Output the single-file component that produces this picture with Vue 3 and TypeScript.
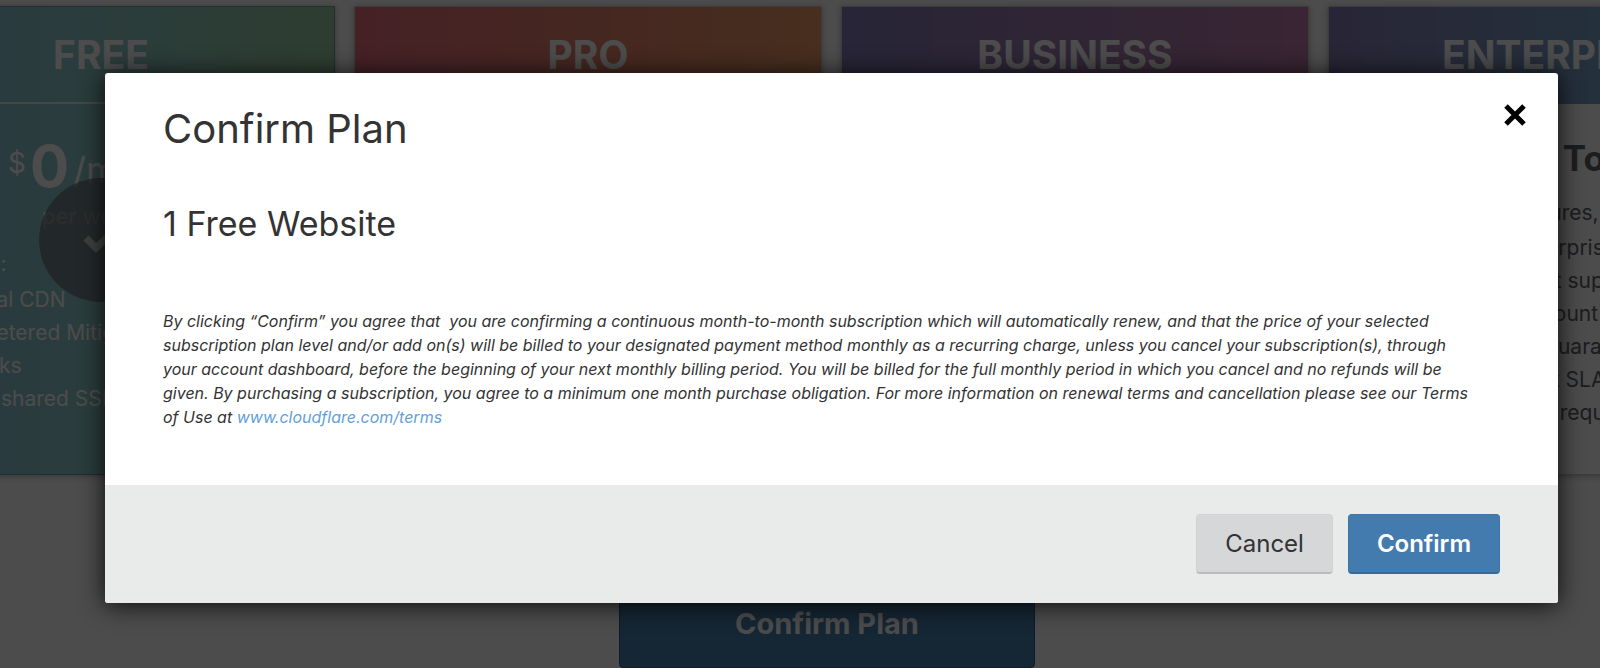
<script setup lang="ts">
interface Plan {
  id: string
  name: string
}

const otherPlans: Plan[] = [
  { id: 'pro', name: 'PRO' },
  { id: 'business', name: 'BUSINESS' },
]

const freeFeatures: string[] = ['Global CDN', 'Unmetered Mitigation of DDoS', 'attacks', 'With shared SSL certificate']

const enterpriseFeatures: string[] = [
  '24/7/365 enterprise-grade',
  'email and chat support',
  'Technical account manager',
  'Total uptime guarantee',
  'A 25x Support SLA',
  'Access to our request logs',
]
</script>

<template>
  <div class="page">
    <main class="plans-page">
      <div class="plans">
        <section class="card free">
          <h2 class="card-name">FREE</h2>
          <div class="card-body">
            <p class="price"><sup>$</sup><strong>0</strong><span>/mo</span></p>
            <p class="per">per website</p>
            <p class="lead">Offers:</p>
            <ul class="features">
              <li v-for="f in freeFeatures" :key="f">{{ f }}</li>
            </ul>
            <span class="selected">
              <svg viewBox="0 0 36 30" width="36" height="30" aria-hidden="true">
                <path d="M3 13 L13 23 L33 4" fill="none" stroke="currentColor" stroke-width="7" />
              </svg>
            </span>
          </div>
        </section>
        <section v-for="p in otherPlans" :key="p.id" class="card" :class="p.id">
          <h2 class="card-name">{{ p.name }}</h2>
        </section>
        <section class="card enterprise">
          <h2 class="card-name">ENTERPRISE</h2>
          <div class="card-body">
            <p class="talk">Talk To Us</p>
            <p class="intro">Business features, plus</p>
            <ul class="features">
              <li v-for="f in enterpriseFeatures" :key="f">{{ f }}</li>
            </ul>
          </div>
        </section>
      </div>
      <button type="button" class="plan-submit">Confirm Plan</button>
    </main>

    <div class="overlay">
      <div class="modal" role="dialog" aria-modal="true" aria-labelledby="modal-title">
        <div class="modal-body">
          <header class="modal-head">
            <h1 id="modal-title">Confirm Plan</h1>
            <button type="button" class="close" aria-label="Close">
              <svg viewBox="0 0 22 22" width="22" height="22" aria-hidden="true">
                <path d="M2 2 L20 20 M20 2 L2 20" fill="none" stroke="#000" stroke-width="5" />
              </svg>
            </button>
          </header>
          <h2 class="summary">1 Free Website</h2>
          <p class="legal">
            By clicking “Confirm” you agree that&nbsp; you are confirming a continuous month-to-month subscription which
            will automatically renew, and that the price of your selected subscription plan level and/or add on(s) will
            be billed to your designated payment method monthly as a recurring charge, unless you cancel your
            subscription(s), through your account dashboard, before the beginning of your next monthly billing period.
            You will be billed for the full monthly period in which you cancel and no refunds will be given. By
            purchasing a subscription, you agree to a minimum one month purchase obligation. For more information on
            renewal terms and cancellation please see our Terms of Use at
            <a href="#terms">www.cloudflare.com/terms</a>
          </p>
        </div>
        <footer class="modal-foot">
          <button type="button" class="btn cancel">Cancel</button>
          <button type="button" class="btn confirm">Confirm</button>
        </footer>
      </div>
    </div>
  </div>
</template>

<style>
body {
  margin: 0;
  background: #4c4c4c;
}
</style>

<style scoped>
.page {
  position: relative;
  min-height: 100vh;
  overflow: hidden;
  background: #fefefe;
  font-family: Inter, 'Liberation Sans', sans-serif;
  color: #333;
}
h1,
h2,
p,
ul {
  margin: 0;
  padding: 0;
  font-weight: 400;
}
ul {
  list-style: none;
}
button {
  font-family: inherit;
  cursor: pointer;
}

.plans-page {
  display: flex;
  flex-direction: column;
  align-items: center;
  padding-top: 6px;
}
.plans {
  display: flex;
  align-self: flex-start;
  gap: 19px;
  margin-left: -133px;
}
.card {
  position: relative;
  box-sizing: border-box;
  width: 468px;
  height: 469px;
  flex: none;
  border: 1px solid #ccc;
  background: #fefefe;
  box-shadow: 0 1px 6px rgba(0, 0, 0, 0.3);
  white-space: nowrap;
}
.card-name {
  box-sizing: border-box;
  height: 97px;
  line-height: 95px;
  text-align: center;
  font-size: 39px;
  font-weight: 700;
  color: #fefefe;
}
.free {
  border-color: #6f9bb0;
  background: linear-gradient(90deg, #85bfe0, #8fcac8 50%, #9acda4);
  color: #fefefe;
}
.free .card-name {
  border-bottom: 2px solid #e8eeee;
}
.pro .card-name {
  background: linear-gradient(90deg, #e7707f, #e7806f 45%, #ee9a66);
}
.business .card-name {
  background: linear-gradient(90deg, #827eb8, #c17dac);
}
.enterprise .card-name {
  background: linear-gradient(90deg, #887db5, #7b9fc8 55%, #74c4dc);
}
.price {
  display: flex;
  align-items: flex-start;
  gap: 4px;
  height: 70px;
  margin: 29px 0 0 140px;
}
.price sup {
  font-size: 28px;
  line-height: 60px;
}
.price strong {
  font-size: 58px;
  line-height: 66px;
}
.price span {
  font-size: 36px;
  line-height: 74px;
}
.per {
  margin-left: 174px;
  font-size: 22px;
  line-height: 26px;
}
.lead {
  margin: 18px 0 3px 71px;
  font-size: 21px;
  line-height: 33px;
}
.features {
  margin-left: 82px;
  font-size: 21px;
  line-height: 33px;
}
.selected {
  position: absolute;
  top: 171px;
  left: 171px;
  display: flex;
  align-items: center;
  justify-content: center;
  width: 124px;
  height: 124px;
  border-radius: 50%;
  background: rgba(106, 106, 110, 0.7);
  color: #cfd3d4;
}
.enterprise .card-body {
  color: #606365;
}
.talk {
  margin-top: 29px;
  padding-left: 18px;
  text-align: center;
  font-size: 35px;
  line-height: 50px;
  font-weight: 700;
}
.intro {
  margin: 13px 0 2px 87px;
  font-size: 21px;
  line-height: 33px;
}
.enterprise .features {
  margin-left: 88px;
}
.plan-submit {
  width: 416px;
  height: 89px;
  margin: 104px 0 0 54px;
  border: 1px solid #2d5f88;
  border-radius: 4px;
  background: #467fae;
  color: #fefefe;
  font-size: 29px;
  font-weight: 700;
}

.overlay {
  position: absolute;
  inset: 0;
  display: flex;
  align-items: flex-start;
  padding: 73px 42px 0 105px;
  background: rgba(0, 0, 0, 0.7);
}
.modal {
  flex: 1;
  border-radius: 3px;
  background: #fff;
  box-shadow: 0 2px 24px rgba(0, 0, 0, 0.85);
  overflow: hidden;
}
.modal-body {
  padding: 31px 58px 56px;
}
.modal-head {
  display: flex;
  justify-content: space-between;
  align-items: flex-start;
}
h1 {
  font-size: 40px;
  line-height: 50px;
}
.close {
  display: flex;
  margin-right: -26px;
  padding: 0;
  border: 0;
  background: none;
}
.summary {
  margin-top: 48px;
  font-size: 34px;
  line-height: 44px;
}
.legal {
  margin-top: 63px;
  padding-right: 28px;
  font-size: 16px;
  line-height: 24px;
  font-style: italic;
}
.legal a {
  color: #62a1d8;
  text-decoration: none;
}
.modal-foot {
  display: flex;
  justify-content: flex-end;
  gap: 15px;
  padding: 29px 58px;
  background: #e9ebea;
}
.btn {
  height: 60px;
  padding: 0 28px;
  border: 1px solid #d1d2d4;
  border-radius: 4px;
  font-size: 24px;
}
.cancel {
  border-bottom: 2px solid #b9babf;
  background: #d6d7d9;
  color: #333;
}
.confirm {
  border-color: #3f76a7;
  border-bottom: 2px solid #366a98;
  background: #447bae;
  color: #fff;
  font-weight: 600;
}
</style>
